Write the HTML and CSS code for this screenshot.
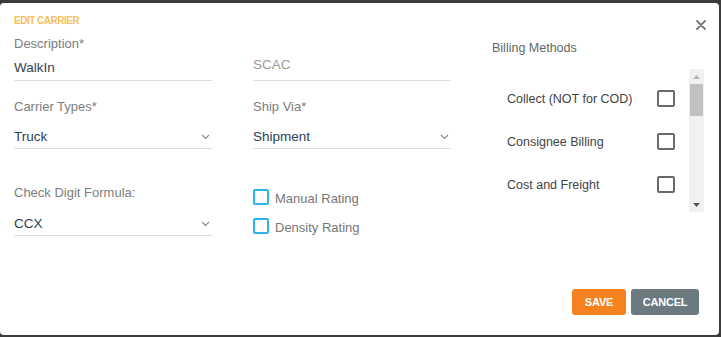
FILE: index.html
```html
<!DOCTYPE html>
<html lang="en">
<head>
    <meta charset="UTF-8">
    <meta name="viewport" content="width=device-width, initial-scale=1.0">
    <title>Edit Carrier</title>
    <link rel="stylesheet" href="styles.css">
</head>
<body>
    <div class="modal">
        <div class="modal-header">
            <span class="modal-title">EDIT CARRIER</span>
            <button class="close-btn" aria-label="Close">
                <svg width="10" height="10" viewBox="0 0 10 10">
                    <path d="M1 1 L9 9 M9 1 L1 9" stroke="#777" stroke-width="1.8" stroke-linecap="round" fill="none"/>
                </svg>
            </button>
        </div>

        <div class="modal-body">
            <!-- first column -->
            <div class="col">
                <label class="field-label" for="description">Description*</label>
                <input class="text-input" id="description" type="text" value="WalkIn">

                <label class="field-label gap-lg">Carrier Types*</label>
                <div class="select-box">
                    <span>Truck</span>
                    <svg class="chevron" width="9" height="6" viewBox="0 0 9 6"><path d="M1 1 L4.5 4.5 L8 1" stroke="#8a8a8a" stroke-width="1.1" fill="none"/></svg>
                </div>

                <label class="field-label gap-xl">Check Digit Formula:</label>
                <div class="select-box select-low">
                    <span>CCX</span>
                    <svg class="chevron" width="9" height="6" viewBox="0 0 9 6"><path d="M1 1 L4.5 4.5 L8 1" stroke="#8a8a8a" stroke-width="1.1" fill="none"/></svg>
                </div>
            </div>

            <!-- second column -->
            <div class="col">
                <span class="field-label">&nbsp;</span>
                <input class="text-input placeholder-input" type="text" placeholder="SCAC">

                <label class="field-label gap-lg">Ship Via*</label>
                <div class="select-box">
                    <span>Shipment</span>
                    <svg class="chevron" width="9" height="6" viewBox="0 0 9 6"><path d="M1 1 L4.5 4.5 L8 1" stroke="#8a8a8a" stroke-width="1.1" fill="none"/></svg>
                </div>

                <div class="check-list">
                    <div class="check-row">
                        <span class="check-box cyan"></span>
                        <span class="check-text">Manual Rating</span>
                    </div>
                    <div class="check-row">
                        <span class="check-box cyan"></span>
                        <span class="check-text">Density Rating</span>
                    </div>
                </div>
            </div>

            <!-- billing methods -->
            <div class="col">
                <span class="billing-title">Billing Methods</span>
                <div class="billing-wrap">
                    <div class="billing-list">
                        <div class="billing-item"><span>Collect (NOT for COD)</span><span class="check-box gray"></span></div>
                        <div class="billing-item"><span>Consignee Billing</span><span class="check-box gray"></span></div>
                        <div class="billing-item"><span>Cost and Freight</span><span class="check-box gray"></span></div>
                    </div>
                    <div class="scrollbar">
                        <div class="scroll-arrow"><svg width="7" height="4" viewBox="0 0 7 4"><path d="M0 4 L3.5 0 L7 4 Z" fill="#b5b5b5"/></svg></div>
                        <div class="scroll-track">
                            <div class="scroll-thumb"></div>
                        </div>
                        <div class="scroll-arrow"><svg width="7" height="4" viewBox="0 0 7 4"><path d="M0 0 L3.5 4 L7 0 Z" fill="#555"/></svg></div>
                    </div>
                </div>
            </div>
        </div>

        <div class="modal-footer">
            <button class="btn btn-save">SAVE</button>
            <button class="btn btn-cancel">CANCEL</button>
        </div>
    </div>
</body>
</html>
```

FILE: styles.css
```css
:root {
    --page-bg: #3c3c3c;
    --title-color: #f6c15a;
    --label-color: #7d7d7d;
    --value-color: #2f4154;
    --line-color: #dedede;
    --cyan: #2cb5e4;
    --orange: #f5821f;
    --slate: #6b7980;
}

* {
    box-sizing: border-box;
}

body {
    margin: 0;
    padding: 3px 2px 2px 0;
    height: 337px;
    overflow: hidden;
    background-color: var(--page-bg);
    font-family: 'Liberation Sans', Arial, sans-serif;
}

.modal {
    width: 719px;
    height: 332px;
    background-color: #fff;
    border-radius: 4px;
    display: flex;
    flex-direction: column;
}

.modal-header {
    height: 32px;
    padding: 0 8px 0 14px;
    display: flex;
    align-items: flex-start;
    justify-content: space-between;
}

.modal-title {
    margin-top: 12px;
    font-size: 10px;
    line-height: 12px;
    font-weight: bold;
    letter-spacing: -0.5px;
    color: var(--title-color);
}

.close-btn {
    margin-top: 12px;
    padding: 0;
    width: 20px;
    height: 20px;
    border: none;
    background: none;
    display: flex;
    align-items: center;
    justify-content: center;
}

.modal-body {
    display: grid;
    grid-template-columns: 198px 198px 212px;
    column-gap: 41px;
    padding-left: 14px;
}

.col {
    display: flex;
    flex-direction: column;
}

.field-label {
    display: block;
    font-size: 13px;
    line-height: 18px;
    color: var(--label-color);
}

.gap-lg {
    margin-top: 17px;
}

.gap-xl {
    margin-top: 35px;
}

.text-input {
    margin-top: 1px;
    width: 100%;
    height: 27px;
    padding: 0;
    border: none;
    border-bottom: 1px solid var(--line-color);
    font-family: inherit;
    font-size: 13.5px;
    color: var(--value-color);
    outline: none;
}

.placeholder-input {
    padding-bottom: 6px;
}

.placeholder-input::placeholder {
    color: #9a9a9a;
}

.select-box {
    margin-top: 9px;
    height: 24px;
    border-bottom: 1px solid var(--line-color);
    display: flex;
    align-items: center;
    justify-content: space-between;
    font-size: 13.5px;
    color: var(--value-color);
}

.select-low {
    height: 25px;
}

.chevron {
    margin-right: 2px;
    margin-top: 1px;
}

.check-list {
    margin-top: 33px;
    display: flex;
    flex-direction: column;
}

.check-row {
    height: 29px;
    display: flex;
    align-items: center;
}

.check-box {
    display: inline-block;
    flex-shrink: 0;
    border-radius: 2px;
    background: #fff;
}

.check-box.cyan {
    width: 16px;
    height: 16px;
    border: 2px solid var(--cyan);
}

.check-box.gray {
    width: 18px;
    height: 17px;
    border: 2px solid #6a6a6a;
}

.check-text {
    margin-left: 6px;
    padding-top: 3px;
    font-size: 13px;
    color: #777;
}

.billing-title {
    margin-top: 4px;
    font-size: 12.5px;
    line-height: 18px;
    color: #666;
}

.billing-wrap {
    margin-top: 12px;
    height: 143px;
    display: flex;
}

.billing-list {
    flex: 1;
    overflow: hidden;
    padding: 8px 14px 0 15px;
}

.billing-item {
    height: 43px;
    display: flex;
    align-items: center;
    justify-content: space-between;
    font-size: 12.5px;
    color: #444;
}

.scrollbar {
    width: 15px;
    background-color: #f1f1f1;
    display: flex;
    flex-direction: column;
}

.scroll-arrow {
    height: 15px;
    display: flex;
    align-items: center;
    justify-content: center;
}

.scroll-track {
    flex: 1;
    padding: 0 1px;
}

.scroll-thumb {
    height: 32px;
    background-color: #c1c1c1;
}

.modal-footer {
    margin-top: auto;
    padding: 0 20px 20px 0;
    display: flex;
    justify-content: flex-end;
    gap: 5px;
}

.btn {
    height: 26px;
    border: none;
    border-radius: 3px;
    color: #fff;
    font-family: inherit;
    font-size: 11px;
    font-weight: bold;
    letter-spacing: -0.2px;
    cursor: pointer;
}

.btn-save {
    width: 54px;
    background-color: var(--orange);
}

.btn-cancel {
    width: 68px;
    background-color: var(--slate);
}
```
